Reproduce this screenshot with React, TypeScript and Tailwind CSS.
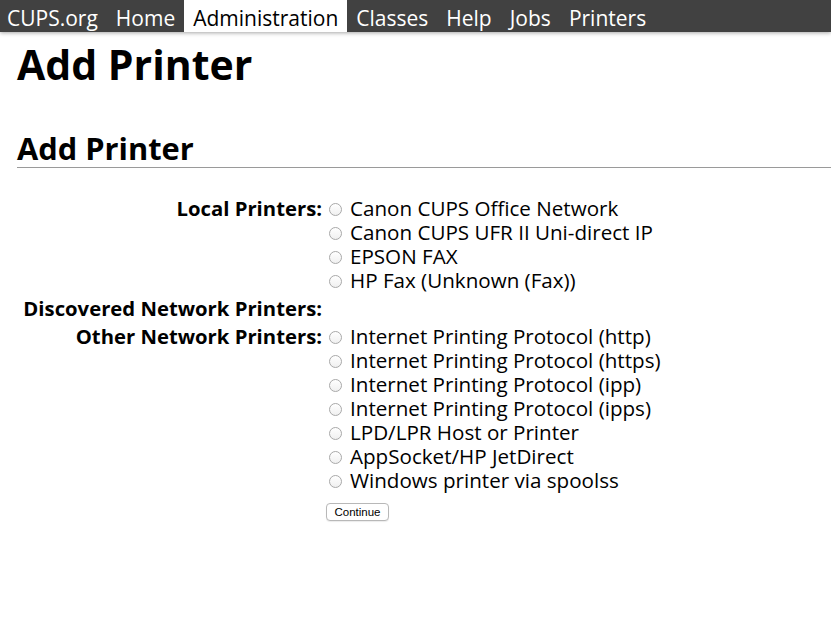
import { ReactNode } from "react"

const navItems = ["CUPS.org", "Home", "Administration", "Classes", "Help", "Jobs", "Printers"]

const localPrinters = [
  "Canon CUPS Office Network",
  "Canon CUPS UFR II Uni-direct IP",
  "EPSON FAX",
  "HP Fax (Unknown (Fax))",
]

const otherPrinters = [
  "Internet Printing Protocol (http)",
  "Internet Printing Protocol (https)",
  "Internet Printing Protocol (ipp)",
  "Internet Printing Protocol (ipps)",
  "LPD/LPR Host or Printer",
  "AppSocket/HP JetDirect",
  "Windows printer via spoolss",
]

const Radio = ({ label }: { label: string }) => {
  return (
    <label className="flex items-start">
      <span className="mt-[7px] ml-[3px] mr-[8px] h-[13px] w-[13px] shrink-0 rounded-full border border-[#a9a9a9] bg-gradient-to-b from-white to-[#f0f0f0]" />
      <span>{label}</span>
    </label>
  )
}

const Row = ({ label, children }: { label: string; children?: ReactNode }) => {
  return (
    <tr>
      <th className="w-[307px] p-[2px] text-right align-top text-[20.3px] font-bold whitespace-nowrap">
        {label}
      </th>
      <td className="p-[2px] align-top">{children}</td>
    </tr>
  )
}

export default function App() {
  return (
    <div className="min-h-screen bg-white font-['Open_Sans',sans-serif] text-black">
      <nav className="relative z-10 flex h-8 bg-[#414141] text-[21px] text-white shadow-[0_1px_4px_rgba(0,0,0,0.35)]">
        {navItems.map((item, i) => (
          <span
            key={item}
            className={
              (item === "Administration" ? "bg-white text-black " : "") +
              (i === 0 ? "pl-[7px] pr-[9px] " : "px-[9px] ") +
              "h-8 pt-[4px] leading-[28px] whitespace-nowrap"
            }
          >
            {item}
          </span>
        ))}
      </nav>

      <div className="pl-[17px]">
        <h1 className="mt-[12px] text-[41px] font-bold leading-none">Add Printer</h1>
        <h2 className="mt-[48px] border-b border-[#9a9a9a] pb-[3px] text-[30.8px] font-bold leading-none">
          Add Printer
        </h2>

        <table className="mt-[26px] border-collapse text-[20.6px] leading-[24px]">
          <tbody>
            <Row label="Local Printers:">
              {localPrinters.map(p => (
                <Radio key={p} label={p} />
              ))}
            </Row>
            <Row label="Discovered Network Printers:" />
            <Row label="Other Network Printers:">
              {otherPrinters.map(p => (
                <Radio key={p} label={p} />
              ))}
            </Row>
            <tr>
              <td />
              <td className="px-[2px] pt-[2px]">
                <button className="h-[18px] w-[63px] rounded-[4px] border border-[#b8b8b8] bg-white font-['Liberation_Sans',sans-serif] text-[11.5px] leading-[16px] shadow-[0_1px_1px_rgba(0,0,0,0.08)]">
                  Continue
                </button>
              </td>
            </tr>
          </tbody>
        </table>
      </div>
    </div>
  )
}
